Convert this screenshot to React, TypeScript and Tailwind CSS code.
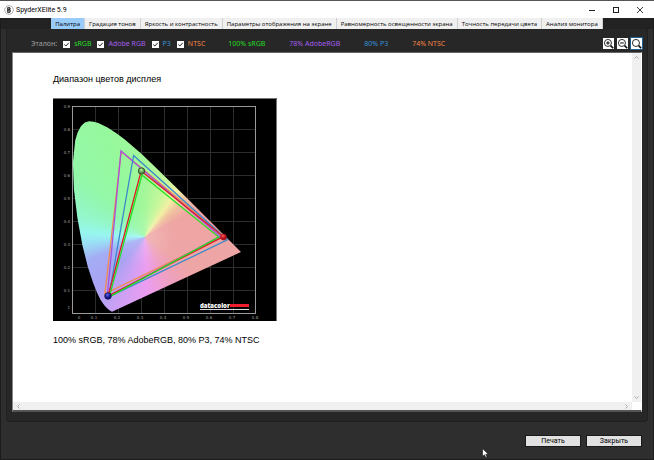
import React, { useState } from 'react';

type Point = [number, number];

const tabs = [
  'Палитра',
  'Градация тонов',
  'Яркость и контрастность',
  'Параметры отображения на экране',
  'Равномерность освещенности экрана',
  'Точность передачи цвета',
  'Анализ монитора',
];

const standards = [
  { id: 'srgb', label: 'sRGB', color: 'text-[#25dc25]' },
  { id: 'adobe', label: 'Adobe RGB', color: 'text-[#a45cec]' },
  { id: 'p3', label: 'P3', color: 'text-[#3593d8]' },
  { id: 'ntsc', label: 'NTSC', color: 'text-[#f48446]' },
];

const results = [
  { label: '100% sRGB', color: 'text-[#25dc25]' },
  { label: '78% AdobeRGB', color: 'text-[#a45cec]' },
  { label: '80% P3', color: 'text-[#3593d8]' },
  { label: '74% NTSC', color: 'text-[#f48446]' },
];

// CIE 1931 spectral locus
const locus: Point[] = [
  [0.1741, 0.005], [0.1644, 0.0109], [0.155, 0.0185], [0.144, 0.0297], [0.1355, 0.0399],
  [0.1241, 0.0578], [0.1096, 0.0868], [0.0913, 0.1327], [0.0687, 0.2007], [0.0454, 0.295],
  [0.0235, 0.4127], [0.0082, 0.5384], [0.0039, 0.6548], [0.0139, 0.7502], [0.0245, 0.785],
  [0.0389, 0.812], [0.0555, 0.8285], [0.0743, 0.8338], [0.0943, 0.8316], [0.1142, 0.8262],
  [0.1547, 0.8059], [0.1929, 0.7816], [0.2296, 0.7543], [0.3016, 0.6923], [0.3731, 0.6245],
  [0.4441, 0.5547], [0.5125, 0.4866], [0.627, 0.3725], [0.6915, 0.3083], [0.7347, 0.2653],
];

const gamuts: { name: string; stroke: string; points: Point[] }[] = [
  { name: 'ntsc', stroke: '#f08a50', points: [[0.214, 0.702], [0.66, 0.335], [0.143, 0.083]] },
  { name: 'adobe', stroke: '#a552dc', points: [[0.213, 0.705], [0.645, 0.333], [0.153, 0.07]] },
  { name: 'p3', stroke: '#3b8acb', points: [[0.268, 0.685], [0.675, 0.318], [0.16, 0.07]] },
  { name: 'display', stroke: '#e01822', points: [[0.301, 0.618], [0.658, 0.332], [0.157, 0.074]] },
  { name: 'srgb', stroke: '#22e022', points: [[0.304, 0.6], [0.638, 0.33], [0.162, 0.07]] },
];

const toX = (x: number) => 19 + x * 230;
const toY = (y: number) => 215 - y * 230;
const toPoints = (points: Point[]) =>
  points.map(([x, y]) => `${toX(x).toFixed(1)},${toY(y).toFixed(1)}`).join(' ');

function GamutChart() {
  const columns = [1, 2, 3, 4, 5, 6, 7];
  const rows = [1, 2, 3, 4, 5, 6, 7, 8];

  return (
    <svg
      className="block w-56 h-auto"
      viewBox="0 0 224 223"
      role="img"
      aria-label="Диапазон цветов дисплея"
    >
      <defs>
        <clipPath id="locus">
          <polygon points={toPoints(locus)} />
        </clipPath>
        <radialGradient id="whitePoint">
          <stop offset="0" stopColor="#fff" stopOpacity=".2" />
          <stop offset="1" stopColor="#fff" stopOpacity="0" />
        </radialGradient>
        <radialGradient id="greenBall" cx="45%" cy="30%">
          <stop offset="0" stopColor="#b8f0a0" />
          <stop offset="1" stopColor="#4f8f45" />
        </radialGradient>
        <radialGradient id="redBall" cx="40%" cy="30%">
          <stop offset="0" stopColor="#ff5a5a" />
          <stop offset="1" stopColor="#a80c14" />
        </radialGradient>
        <radialGradient id="blueBall" cx="40%" cy="30%">
          <stop offset="0" stopColor="#5a62f0" />
          <stop offset="1" stopColor="#10107c" />
        </radialGradient>
      </defs>
      <rect width="224" height="223" fill="#000" />
      <path d="M0 .5H223.500V223" fill="none" stroke="#777" />
      <g stroke="#2c2c2c" shapeRendering="crispEdges">
        {columns.map((n) => (
          <line key={n} x1={19.5 + n * 23} x2={19.5 + n * 23} y1="9" y2="215" />
        ))}
        {rows.map((n) => (
          <line key={n} x1="20" x2="202" y1={215.5 - n * 23} y2={215.5 - n * 23} />
        ))}
      </g>
      <rect x="19.5" y="8.5" width="183" height="207" fill="none" stroke="#999" />
      <g clipPath="url(#locus)">
        <foreignObject x="0" y="0" width="224" height="223">
          <div className="h-full w-full bg-[conic-gradient(at_92px_139px,#a4f79a_0deg,#c8f79c_22deg,#f2f0a4_35deg,#f0c4a0_46deg,#eea5a3_62deg,#eea5a6_125deg,#eea0c0_150deg,#ec9df0_178deg,#cfa0f4_200deg,#aaa2f3_222deg,#a3aef4_248deg,#9ae0f5_264deg,#96f7ef_274deg,#94f7cb_288deg,#93f7aa_312deg,#96f89c_340deg,#a4f79a_360deg)]" />
        </foreignObject>
        <circle cx="92" cy="139" r="30" fill="url(#whitePoint)" />
      </g>
      <g fill="none" strokeWidth="1.3">
        {gamuts.map((gamut) => (
          <polygon key={gamut.name} points={toPoints(gamut.points)} stroke={gamut.stroke} />
        ))}
      </g>
      <circle cx="88.500" cy="73" r="3.200" fill="url(#greenBall)" stroke="#35502c" />
      <circle cx="170.500" cy="139" r="3" fill="url(#redBall)" stroke="#a01018" strokeWidth=".6" />
      <circle cx="55" cy="198" r="3.300" fill="url(#blueBall)" stroke="#15154f" strokeWidth=".8" />
      <g fill="#a0a0a0" fontFamily="DejaVu Sans, sans-serif" fontSize="4">
        {[...rows, 9].map((n) => (
          <text key={n} x="17" y={217 - n * 23} textAnchor="end">
            {`0.${n}`}
          </text>
        ))}
        <text x="17" y="211" textAnchor="end">1</text>
        <text x="26" y="221" textAnchor="middle">0</text>
        {[...columns, 8].map((n) => (
          <text key={n} x={18 + n * 23} y="221" textAnchor="middle">
            {`0.${n}`}
          </text>
        ))}
      </g>
      <text
        x="147"
        y="210"
        fill="#fff"
        fontFamily="Open Sans, sans-serif"
        fontSize="6"
        fontWeight="800"
      >
        datacolor
      </text>
      <rect x="177" y="206" width="19" height="3" fill="#ee1c2e" />
      <path d="M147 211.500H196" stroke="#ddd" />
    </svg>
  );
}

function ZoomIcon({ sign }: { sign?: 'plus' | 'minus' }) {
  return (
    <svg className="size-full" viewBox="0 0 10 10" fill="none" stroke="#111">
      <circle cx="4.500" cy="4.500" r="3.200" strokeWidth=".8" />
      <path d="M6.900 6.900L9.300 9.300" strokeWidth="1.500" />
      {sign && <path d="M2.900 4.500H6.100" />}
      {sign === 'plus' && <path d="M4.500 2.900V6.100" />}
    </svg>
  );
}

function TitleBar() {
  return (
    <header className="flex h-[18px] items-center border-t border-[#555] bg-white pl-1">
      <svg className="size-2.5" viewBox="0 0 10 10">
        <circle cx="5" cy="5" r="4.300" fill="#fff" stroke="#777" strokeWidth=".8" strokeDasharray="1.500 .5" />
        <path d="M3.800 2.700H5.400Q6.800 3.700 5.400 4.900Q7.200 6 5.400 7.300H3.800ZM3.800 4.900H5.600" fill="none" stroke="#111" strokeWidth="1.100" />
      </svg>
      <h1 className="ml-0.5 flex-1 text-[7px] leading-3 text-black">SpyderXElite 5.9</h1>
      <button className="flex h-4 w-6 items-center justify-center" aria-label="Свернуть">
        <svg className="size-2" viewBox="0 0 8 8"><path d="M1 4.500H7" stroke="#222" /></svg>
      </button>
      <button className="flex h-4 w-6 items-center justify-center" aria-label="Развернуть">
        <svg className="size-2" viewBox="0 0 8 8"><rect x="1.500" y="1.500" width="5" height="5" fill="none" stroke="#222" /></svg>
      </button>
      <button className="mr-0.5 flex h-4 w-6 items-center justify-center" aria-label="Закрыть окно">
        <svg className="size-2" viewBox="0 0 8 8"><path d="M1 1L7 7M7 1L1 7" stroke="#222" strokeWidth=".9" /></svg>
      </button>
    </header>
  );
}

export default function App() {
  const [activeTab, setActiveTab] = useState(0);
  const [checked, setChecked] = useState<Record<string, boolean>>({
    srgb: true,
    adobe: true,
    p3: true,
    ntsc: true,
  });

  const toggle = (id: string) => setChecked({ ...checked, [id]: !checked[id] });

  return (
    <div className="relative flex min-h-screen flex-col bg-[#2e2e2e] font-['Roboto',sans-serif] text-[7px] leading-[10px]">
      <TitleBar />
      <div className="flex flex-1 flex-col border border-t-0 border-[#1c1c1c]">
        <nav className="flex justify-center bg-[#222] font-['Open_Sans',sans-serif] text-[6px] leading-[10px] font-medium" role="tablist">
          {tabs.map((tab, index) => (
            <button
              key={tab}
              role="tab"
              aria-selected={activeTab === index}
              onClick={() => setActiveTab(index)}
              className={`h-[11px] border-r border-[#cfcfcf] px-1 whitespace-nowrap text-black ${
                activeTab === index ? 'bg-[#99ccfb]' : 'bg-[#f0f0f0]'
              }`}
            >
              {tab}
            </button>
          ))}
        </nav>
        <main className="mx-[5px] flex flex-1 flex-col rounded-b-sm border border-t-0 border-[#202020] bg-[#272727] px-[5px] pb-[9px]">
          <div className="flex h-[23px] items-end pb-[3px] pl-[19px] font-['Noto_Sans',sans-serif]">
            <span className="mr-1.5 text-[#a0a0a0]">Эталон:</span>
            <div className="flex gap-1.5">
              {standards.map((item) => (
                <label key={item.id} className={`flex items-center gap-1 ${item.color}`}>
                  <span className="relative flex size-[7px]">
                    <input
                      type="checkbox"
                      checked={checked[item.id]}
                      onChange={() => toggle(item.id)}
                      className="size-[7px] appearance-none bg-white"
                    />
                    {checked[item.id] && (
                      <svg className="pointer-events-none absolute inset-0" viewBox="0 0 7 7" fill="none" stroke="#222">
                        <path d="M1.300 3.500L2.900 5L5.800 1.800" />
                      </svg>
                    )}
                  </span>
                  {item.label}
                </label>
              ))}
            </div>
            <div className="ml-[23px] flex gap-6">
              {results.map((item) => (
                <span key={item.label} className={item.color}>{item.label}</span>
              ))}
            </div>
            <div className="ml-auto flex gap-[3px]">
              <button className="size-[11px] bg-white" aria-label="Увеличить"><ZoomIcon sign="plus" /></button>
              <button className="size-[11px] bg-white" aria-label="Уменьшить"><ZoomIcon sign="minus" /></button>
              <button className="size-[11px] bg-white outline outline-[#1f5f92]" aria-label="По размеру окна"><ZoomIcon /></button>
            </div>
          </div>
          <div className="flex flex-1 flex-col border border-t-[#666] border-r-white border-b-2 border-b-[#555] border-l-[#888] bg-white">
            <div className="flex flex-1">
              <section className="flex-1 px-10 pt-[19px] font-['Liberation_Sans',sans-serif] text-[9px] leading-[14px] text-black">
                <h2>Диапазон цветов дисплея</h2>
                <div className="py-3">
                  <GamutChart />
                </div>
                <p>100% sRGB, 78% AdobeRGB, 80% P3, 74% NTSC</p>
              </section>
              <div className="flex w-[9px] flex-col items-center justify-between bg-[#f0f0f0] py-0.5">
                <svg className="size-[5px]" viewBox="0 0 5 5" fill="none" stroke="#aaa"><path d="M.5 3.500L2.500 1.500L4.500 3.500" /></svg>
                <svg className="size-[5px]" viewBox="0 0 5 5" fill="none" stroke="#aaa"><path d="M.5 1.500L2.500 3.500L4.500 1.500" /></svg>
              </div>
            </div>
            <div className="mr-[9px] flex h-2 items-center justify-between bg-[#f0f0f0] px-[3px]">
              <svg className="size-[5px]" viewBox="0 0 5 5" fill="none" stroke="#aaa"><path d="M3.500 .5L1.500 2.500L3.500 4.500" /></svg>
              <svg className="size-[5px]" viewBox="0 0 5 5" fill="none" stroke="#aaa"><path d="M1.500 .5L3.500 2.500L1.500 4.500" /></svg>
            </div>
          </div>
        </main>
        <footer className="flex justify-end gap-[5px] px-[11px] pt-[13px] pb-3">
          <button className="h-3 w-14 border border-[#1a1a1a] bg-[#e1e1e1] leading-none text-black">Печать</button>
          <button className="h-3 w-14 border border-[#1a1a1a] bg-[#e1e1e1] leading-none text-black">Закрыть</button>
        </footer>
      </div>
      <svg className="pointer-events-none absolute right-[165px] bottom-0.5 h-2.5 w-[7px]" viewBox="0 0 7 10">
        <path d="M.5 .5V8.500L2.400 6.800L3.700 9.500L5 8.900L3.800 6.300H6.300Z" fill="#fff" stroke="#111" strokeWidth=".6" />
      </svg>
    </div>
  );
}
